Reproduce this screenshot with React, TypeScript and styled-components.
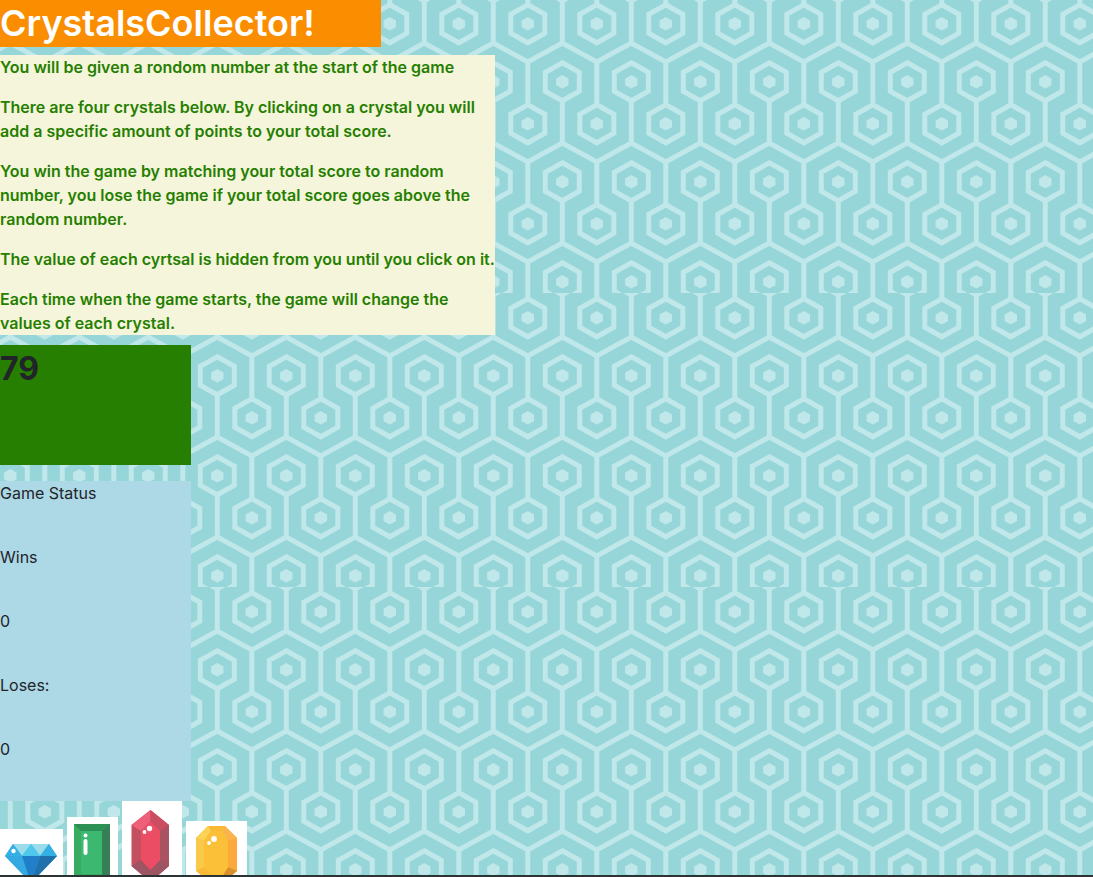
import React from "react";
import styled, { createGlobalStyle } from "styled-components";

const hex = (cx: number, cy: number, w: number, r: number) =>
  [[0, -r], [w, -r / 2], [w, r / 2], [0, r], [-w, r / 2], [-w, -r / 2]]
    .map(([x, y]) => `${cx + x},${cy + y}`)
    .join(" ");

const AX = 44.8;
const BX = 10.3;
const cell = (x: number, y: number) =>
  `<polygon points="${hex(x, y, 6.2, 6.8)}" fill="#c0e7e9" stroke="none"/><polygon points="${hex(x, y, 17, 19)}"/>`;
const band = (o: number) =>
  cell(AX, 24.8 + o) +
  cell(AX - 69, 24.8 + o) +
  cell(BX, 82.8 + o) +
  cell(BX + 69, 82.8 + o) +
  `<path d="M${AX - 69} ${63 + o}L${BX} ${44 + o}L${AX} ${63 + o}L${BX + 69} ${44 + o}M${BX} ${44 + o}V${o + 3}M${AX} ${63 + o}V${105 + o}"/>`;
const tile = encodeURIComponent(
  `<svg xmlns="http://www.w3.org/2000/svg" width="69" height="294"><rect width="69" height="294" fill="#96d6d9"/><g fill="none" stroke="#c0e7e9" stroke-width="5">${[-100, 0, 100, 200].map(band).join("")}</g></svg>`
);

const GlobalStyle = createGlobalStyle`
  *, *::before, *::after { box-sizing: border-box; }
  body {
    margin: 0;
    background: #96d6d9 url("data:image/svg+xml,${tile}") 0 -1px;
    color: #212529;
    font: 400 16px/24px Inter, "Liberation Sans", sans-serif;
  }
`;

const Page = styled.main`
  height: 100vh;
  overflow: hidden;
  border-bottom: 2px solid #2c3334;
`;
const Title = styled.h1`
  width: 381px;
  max-width: 100%;
  margin: 0 0 8px;
  background: #fa8d00;
  color: #fff;
  font-size: 36px;
  font-weight: 600;
  line-height: 47px;
`;
const Rules = styled.section`
  display: flex;
  flex-direction: column;
  gap: 16px;
  width: 495px;
  max-width: 100%;
  margin-bottom: 10px;
  background: #f5f5dc;
  color: #267f00;
  font-weight: 600;
`;
const Rule = styled.p`
  margin: 0;
`;
const Target = styled.div`
  width: 191px;
  height: 120px;
  margin-bottom: 16px;
  background: #267f00;
  font-size: 32px;
  font-weight: 700;
  line-height: 48px;
`;
const Status = styled.section`
  display: flex;
  flex-direction: column;
  gap: 40px;
  width: 191px;
  padding-bottom: 40px;
  background: #add8e6;
`;
const Line = styled.p`
  margin: 0;
`;
const Crystals = styled.div`
  display: flex;
  align-items: flex-end;
  gap: 4px;
`;
const Crystal = styled.button`
  display: block;
  padding: 0;
  border: 0;
  background: #fff;
  cursor: pointer;

  svg { display: block; }
`;

const rules = [
  "You will be given a rondom number at the start of the game",
  "There are four crystals below. By clicking on a crystal you will add a specific amount of points to your total score.",
  "You win the game by matching your total score to random number, you lose the game if your total score goes above the random number.",
  "The value of each cyrtsal is hidden from you until you click on it.",
  "Each time when the game starts, the game will change the values of each crystal.",
];
const status = ["Game Status", "Wins", "0", "Loses:", "0"];

const Diamond = () => (
  <svg width="63" height="64" viewBox="0 0 63 64">
    <path d="M5 27L13 15H49L57 27L31 54Z" fill="#35b0e5" />
    <path d="M13 15H49L40 27L31 15L22 27Z" fill="#9bdcea" />
    <path d="M13 15L22 27H5Z" fill="#35b0e5" />
    <path d="M49 15L57 27H40Z" fill="#35b0e5" />
    <path d="M22 27L31 15L40 27Z" fill="#50c8ee" />
    <path d="M5 27H22L31 54Z" fill="#35a9e1" />
    <path d="M22 27H40L31 54Z" fill="#217fc9" />
    <path d="M40 27H57L31 54Z" fill="#2070ab" />
    <circle cx="13.500" cy="22" r="2.200" fill="#fff" />
  </svg>
);
const Emerald = () => (
  <svg width="51" height="76" viewBox="0 0 51 76">
    <path d="M7 7H43V69H7Z" fill="#37ab60" />
    <path d="M7 7H43L35 14H14Z" fill="#2c8f54" />
    <path d="M43 7V69L35 57V14Z" fill="#367e55" />
    <path d="M14 14H35V57H14Z" fill="#3db871" />
    <path d="M18.500 24V36" stroke="#fff" strokeWidth="4" strokeLinecap="round" />
    <circle cx="18.500" cy="18.500" r="2" fill="#fff" />
  </svg>
);
const Ruby = () => (
  <svg width="60" height="92" viewBox="0 0 60 92">
    <path d="M28.500 9L47 24V65L28.500 81L9.500 65V24Z" fill="#c34f5f" />
    <path d="M28.500 9L9.500 24L19 30L28.500 20Z" fill="#ee6079" />
    <path d="M28.500 9L47 24L38 30L28.500 20Z" fill="#cb4d62" />
    <path d="M47 24V65L38 59V30Z" fill="#a95362" />
    <path d="M9.500 65L19 59L28.500 69L38 59L47 65L28.500 81Z" fill="#9e5563" />
    <path d="M28.500 20L38 30V59L28.500 69L19 59V30Z" fill="#eb4d64" />
    <circle cx="27.500" cy="27.500" r="2.700" fill="#fff" />
    <circle cx="22.500" cy="31" r="1.900" fill="#fff" />
  </svg>
);
const Topaz = () => (
  <svg width="61" height="72" viewBox="0 0 61 72">
    <path d="M22 5H39L51 17V50L39 60H22L10 50V17Z" fill="#f9b934" />
    <path d="M10 17L22 5L25 10L18 20Z" fill="#fbd253" />
    <path d="M10 17L18 20V46L10 50Z" fill="#fbc94a" />
    <path d="M39 5L51 17L42 20L37 10Z" fill="#fab44e" />
    <path d="M51 17V50L42 46V20Z" fill="#fca83b" />
    <path d="M51 50L39 60L37 54L42 46Z" fill="#d9902f" />
    <path d="M25 10H37L42 20V46L37 54H25L18 46V20Z" fill="#fcbf38" />
    <circle cx="28" cy="18" r="2.900" fill="#fff" />
    <circle cx="23" cy="22" r="1.900" fill="#fff" />
  </svg>
);
const gems = [
  { name: "Blue crystal", Art: Diamond },
  { name: "Green crystal", Art: Emerald },
  { name: "Red crystal", Art: Ruby },
  { name: "Yellow crystal", Art: Topaz },
];

export default function App() {
  return (
    <>
      <GlobalStyle />
      <Page>
        <Title>CrystalsCollector!</Title>
        <Rules>
          {rules.map((text) => (
            <Rule key={text}>{text}</Rule>
          ))}
        </Rules>
        <Target>79</Target>
        <Status>
          {status.map((text, i) => (
            <Line key={i}>{text}</Line>
          ))}
        </Status>
        <Crystals>
          {gems.map(({ name, Art }) => (
            <Crystal key={name} type="button" aria-label={name}>
              <Art />
            </Crystal>
          ))}
        </Crystals>
      </Page>
    </>
  );
}
